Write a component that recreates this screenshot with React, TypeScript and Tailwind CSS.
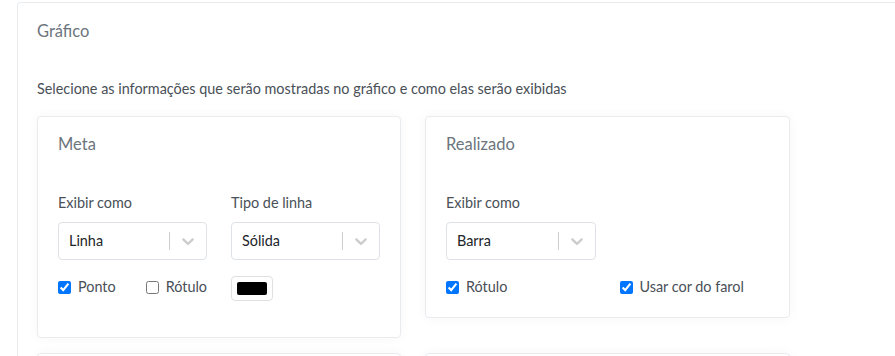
import React from "react";

const Chevron = () => (
  <svg viewBox="0 0 20 20" width="20" height="20" fill="#cccccc" aria-hidden="true">
    <path d="M4.516 7.548c0.436-0.446 1.043-0.481 1.576 0l3.908 3.747 3.908-3.747c0.533-0.481 1.141-0.446 1.574 0 0.436 0.445 0.408 1.197 0 1.615-0.406 0.418-4.695 4.502-4.695 4.502-0.217 0.223-0.502 0.335-0.787 0.335s-0.57-0.112-0.789-0.335c0 0-4.287-4.084-4.695-4.502s-0.436-1.17 0-1.615z" />
  </svg>
);

const Select = ({ value }: { value: string }) => (
  <div className="flex h-[38px] items-center rounded-[4px] border border-[#dee2e6] bg-white">
    <div className="flex-1 pl-[10px] text-[14.4px] text-[#212529]">{value}</div>
    <span className="h-[18px] w-px bg-[#cccccc]" />
    <div className="p-[8px]">
      <Chevron />
    </div>
  </div>
);

const Check = ({ label, checked }: { label: string; checked: boolean }) => (
  <label className="flex items-center gap-[7px] text-[14.4px] text-[#495057]">
    <input type="checkbox" defaultChecked={checked} className="m-0 h-[13px] w-[13px] accent-[#0075ff]" />
    {label}
  </label>
);

const Card = ({ children, title }: { children: React.ReactNode; title?: string }) => (
  <div className="rounded-[4px] border border-[#e9ecef] bg-white px-[20px] shadow-[0_0_12px_rgba(0,0,0,0.04)]">
    {title ? <div className="pt-[17px] text-[16.5px] leading-[20px] text-[#6c757d]">{title}</div> : null}
    {children}
  </div>
);

export default function App() {
  return (
    <div className="h-[356px] overflow-hidden bg-white pl-[17px] pt-[2px]" style={{ fontFamily: "Lato, 'Noto Sans', sans-serif" }}>
      <div className="w-[900px] rounded-tl-[4px] border-l border-t border-[#e9ecef] px-[19px]">
        <div className="pt-[18px] text-[16.5px] leading-[20px] text-[#6c757d]">Gráfico</div>
        <div className="mt-[38px] text-[14.4px] leading-[20px] text-[#495057]">
          Selecione as informações que serão mostradas no gráfico e como elas serão exibidas
        </div>
        <div className="mt-[17px] grid w-[753px] grid-cols-[364px_365px] items-start gap-x-[24px] gap-y-[15px]">
          <Card title="Meta">
            <div className="mt-[39px] grid grid-cols-2 gap-x-[24px]">
              <div>
                <div className="text-[14.4px] leading-[20px] text-[#495057]">Exibir como</div>
                <div className="mt-[9px]"><Select value="Linha" /></div>
              </div>
              <div>
                <div className="text-[14.4px] leading-[20px] text-[#495057]">Tipo de linha</div>
                <div className="mt-[9px]"><Select value="Sólida" /></div>
              </div>
              <div className="mt-[17px] flex h-[20px] gap-[30px]">
                <Check label="Ponto" checked />
                <Check label="Rótulo" checked={false} />
              </div>
              <div className="mt-[17px] pb-[36px]">
                <div className="-mt-[4px] inline-flex rounded-[4px] border border-[#e0e0e0] p-[5px]">
                  <div className="h-[13px] w-[30px] rounded-[2px] bg-black" />
                </div>
              </div>
            </div>
          </Card>
          <Card title="Realizado">
            <div className="mt-[39px] grid grid-cols-2 gap-x-[24px]">
              <div>
                <div className="text-[14.4px] leading-[20px] text-[#495057]">Exibir como</div>
                <div className="mt-[9px]"><Select value="Barra" /></div>
              </div>
              <div />
              <div className="mt-[17px] flex h-[20px]">
                <Check label="Rótulo" checked />
              </div>
              <div className="mt-[17px] flex h-[20px]">
                <Check label="Usar cor do farol" checked />
              </div>
              <div className="col-span-2 h-[20px]" />
            </div>
          </Card>
          <Card>
            <div className="h-[200px]" />
          </Card>
          <Card>
            <div className="h-[200px]" />
          </Card>
        </div>
      </div>
    </div>
  );
}
